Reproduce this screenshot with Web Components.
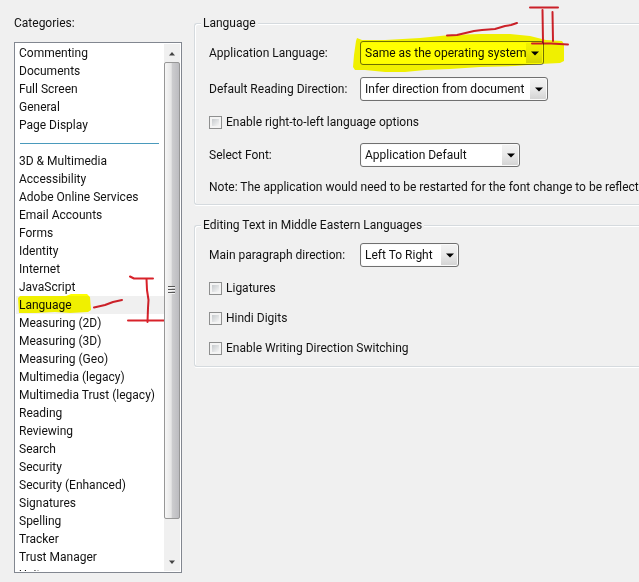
<!DOCTYPE html>
<html lang="en">
<head>
<meta charset="utf-8">
<meta name="viewport" content="width=device-width, initial-scale=1">
<title>Preferences</title>
<style>
  body {
    margin: 0;
    background: #f0f0f0;
    color: #111;
    font: 12px/16px Roboto, "Open Sans", sans-serif;
    overflow: hidden;
  }
</style>
</head>
<body>
<preferences-page>
  <category-list slot="categories" label="Categories:">
    <category-item>Commenting</category-item>
    <category-item>Documents</category-item>
    <category-item>Full Screen</category-item>
    <category-item>General</category-item>
    <category-item>Page Display</category-item>
    <category-divider></category-divider>
    <category-item>3D &amp; Multimedia</category-item>
    <category-item>Accessibility</category-item>
    <category-item>Adobe Online Services</category-item>
    <category-item>Email Accounts</category-item>
    <category-item>Forms</category-item>
    <category-item>Identity</category-item>
    <category-item>Internet</category-item>
    <category-item>JavaScript</category-item>
    <category-item selected>Language<marker-note slot="note" kind="category"></marker-note></category-item>
    <category-item>Measuring (2D)</category-item>
    <category-item>Measuring (3D)</category-item>
    <category-item>Measuring (Geo)</category-item>
    <category-item>Multimedia (legacy)</category-item>
    <category-item>Multimedia Trust (legacy)</category-item>
    <category-item>Reading</category-item>
    <category-item>Reviewing</category-item>
    <category-item>Search</category-item>
    <category-item>Security</category-item>
    <category-item>Security (Enhanced)</category-item>
    <category-item>Signatures</category-item>
    <category-item>Spelling</category-item>
    <category-item>Tracker</category-item>
    <category-item>Trust Manager</category-item>
    <category-item>Units</category-item>
  </category-list>

  <option-group legend="Language">
    <select-field label="Application Language:" value="Same as the operating system" size="184">
      <marker-note slot="note" kind="select"></marker-note>
    </select-field>
    <select-field label="Default Reading Direction:" value="Infer direction from document" size="188"></select-field>
    <check-field label="Enable right-to-left language options"></check-field>
    <select-field label="Select Font:" value="Application Default" size="160"></select-field>
    <hint-text>Note: The application would need to be restarted for the font change to be reflect</hint-text>
  </option-group>

  <option-group legend="Editing Text in Middle Eastern Languages">
    <select-field label="Main paragraph direction:" value="Left To Right" size="99"></select-field>
    <check-field label="Ligatures"></check-field>
    <check-field label="Hindi Digits"></check-field>
    <check-field label="Enable Writing Direction Switching"></check-field>
  </option-group>
</preferences-page>

<script>
class PreferencesPage extends HTMLElement {
  constructor() {
    super();
    this.attachShadow({ mode: 'open' });
    this.shadowRoot.innerHTML = `
      <style>
        :host {
          display: flex;
          gap: 12px;
          box-sizing: border-box;
          height: 100vh;
          padding: 15px 0 9px 14px;
        }

        main {
          flex: 1;
          min-width: 0;
          display: flex;
          flex-direction: column;
          gap: 12px;
        }
      </style>
      <slot name="categories"></slot>
      <main><slot></slot></main>
    `;
  }
}

class CategoryList extends HTMLElement {
  constructor() {
    super();
    this.attachShadow({ mode: 'open' });
  }

  connectedCallback() {
    this.shadowRoot.innerHTML = `
      <style>
        :host {
          display: flex;
          flex-direction: column;
          flex: none;
          gap: 11px;
          width: 168px;
        }

        .frame {
          flex: 1;
          min-height: 0;
          display: flex;
          background: #fff;
          border: 1px solid #828790;
          padding: 1px;
        }

        .items {
          flex: 1;
          min-width: 0;
          overflow: hidden;
        }
      </style>
      <div id="label">${this.getAttribute('label')}</div>
      <div class="frame">
        <div class="items" role="listbox" aria-labelledby="label"><slot></slot></div>
        <scroll-bar></scroll-bar>
      </div>
    `;

    const items = this.shadowRoot.querySelector('.items');
    this.shadowRoot.querySelector('scroll-bar').addEventListener('step', e => {
      items.scrollTop += e.detail * 18;
    });
    this.addEventListener('click', e => {
      const item = e.target.closest('category-item');
      if (!item) return;
      this.querySelectorAll('category-item').forEach(c => c.toggleAttribute('selected', c === item));
    });
  }
}

class CategoryItem extends HTMLElement {
  constructor() {
    super();
    this.attachShadow({ mode: 'open' });
    this.shadowRoot.innerHTML = `
      <style>
        :host {
          display: block;
          position: relative;
          padding: 0 3px;
          line-height: 18px;
          white-space: nowrap;
          cursor: default;
        }

        :host([selected]) {
          background: #f0f0f0;
        }
      </style>
      <slot></slot><slot name="note"></slot>
    `;
  }

  static get observedAttributes() {
    return ['selected'];
  }

  connectedCallback() {
    this.setAttribute('role', 'option');
  }

  attributeChangedCallback() {
    this.setAttribute('aria-selected', this.hasAttribute('selected'));
  }
}

class CategoryDivider extends HTMLElement {
  constructor() {
    super();
    this.attachShadow({ mode: 'open' });
    this.shadowRoot.innerHTML = `
      <style>
        :host {
          display: grid;
          align-items: center;
          height: 18px;
          padding: 0 5px 0 4px;
        }

        hr {
          width: 100%;
          height: 1px;
          margin: 0;
          border: 0;
          background: #4a9abc;
        }
      </style>
      <hr>
    `;
  }
}

class ScrollBar extends HTMLElement {
  constructor() {
    super();
    this.attachShadow({ mode: 'open' });
    this.shadowRoot.innerHTML = `
      <style>
        :host {
          display: flex;
          flex-direction: column;
          flex: none;
          width: 16px;
          background: #f0f0f0;
        }

        button {
          display: grid;
          place-items: center;
          height: 18px;
          padding: 0;
          border: 0;
          background: none;
        }

        .track {
          flex: 1;
          min-height: 0;
        }

        .thumb {
          display: grid;
          place-items: center;
          box-sizing: border-box;
          height: 93%;
          border: 1px solid #979797;
          border-radius: 2px;
          background: linear-gradient(to right, #f6f6f6, #e6e6e6 45%, #cdcdcf 50%, #bcbcc0);
        }

        svg {
          display: block;
        }
      </style>
      <button aria-label="Scroll up" data-step="-1">
        <svg width="8" height="5"><path d="M1 4.5 4 1 7 4.5z" fill="#444"/></svg>
      </button>
      <div class="track">
        <div class="thumb">
          <svg width="8" height="8">
            <path d="M0 .5h7M0 3.5h7M0 6.5h7" stroke="#555"/>
            <path d="M0 1.5h7M0 4.5h7M0 7.5h7" stroke="#f4f4f4"/>
          </svg>
        </div>
      </div>
      <button aria-label="Scroll down" data-step="1">
        <svg width="8" height="5"><path d="M1 .5h6L4 4z" fill="#444"/></svg>
      </button>
    `;
    this.shadowRoot.querySelectorAll('button').forEach(button => {
      button.addEventListener('click', () => {
        this.dispatchEvent(new CustomEvent('step', { detail: Number(button.dataset.step) }));
      });
    });
  }
}

class OptionGroup extends HTMLElement {
  constructor() {
    super();
    this.attachShadow({ mode: 'open' });
  }

  connectedCallback() {
    // The right side runs out of the window, so it has no border
    this.shadowRoot.innerHTML = `
      <style>
        :host {
          display: block;
        }

        fieldset {
          margin: 0;
          min-width: 0;
          padding: 10px 0 9px 6px;
          border: 1px solid #d5dade;
          border-right: 0;
          border-radius: 3px 0 0 3px;
          box-shadow: inset 1px 1px #fff, 0 1px #fff;
        }

        legend {
          padding: 0 2px;
          background: #f0f0f0;
        }

        .rows {
          display: flex;
          flex-direction: column;
          gap: 12px;
          padding-left: 8px;
        }
      </style>
      <fieldset>
        <legend>${this.getAttribute('legend')}</legend>
        <div class="rows"><slot></slot></div>
      </fieldset>
    `;
  }
}

class SelectField extends HTMLElement {
  constructor() {
    super();
    this.attachShadow({ mode: 'open' });
  }

  connectedCallback() {
    this.shadowRoot.innerHTML = `
      <style>
        :host {
          display: grid;
          grid-template-columns: 151px auto;
          justify-content: start;
          align-items: center;
          white-space: nowrap;
        }

        .box {
          display: grid;
          align-items: center;
          position: relative;
          width: ${this.getAttribute('size')}px;
        }

        select, svg {
          grid-area: 1 / 1;
        }

        select {
          appearance: none;
          box-sizing: border-box;
          width: 100%;
          height: 24px;
          margin: 0;
          padding: 0 16px 0 4px;
          border: 1px solid #707070;
          border-radius: 3px;
          background: linear-gradient(#f3f3f3, #e9e9e9 50%, #d2d2d2) right / 17px 100% no-repeat, #fff;
          box-shadow: inset 0 0 0 1px #fafafa;
          color: inherit;
          font: inherit;
        }

        svg {
          justify-self: end;
          margin-right: 5px;
          pointer-events: none;
        }
      </style>
      <label for="field">${this.getAttribute('label')}</label>
      <div class="box">
        <select id="field"><option>${this.getAttribute('value')}</option></select>
        <svg width="8" height="5"><path d="M0 .5h8L4 4.5z" fill="#000"/></svg>
        <slot name="note"></slot>
      </div>
    `;
  }
}

class CheckField extends HTMLElement {
  constructor() {
    super();
    this.attachShadow({ mode: 'open' });
  }

  connectedCallback() {
    this.shadowRoot.innerHTML = `
      <style>
        :host {
          display: flex;
          align-items: center;
          gap: 4px;
          height: 18px;
        }

        input {
          appearance: none;
          box-sizing: border-box;
          width: 13px;
          height: 13px;
          margin: 0;
          border: 1px solid #8e8f8f;
          background: linear-gradient(135deg, #c6cacd, #f6f6f6) content-box, #f4f4f4;
          padding: 2px;
        }

        input:checked {
          background: #3c6f9c content-box;
        }
      </style>
      <input type="checkbox" id="field">
      <label for="field">${this.getAttribute('label')}</label>
    `;
  }
}

class HintText extends HTMLElement {
  constructor() {
    super();
    this.attachShadow({ mode: 'open' });
    this.shadowRoot.innerHTML = `
      <style>
        :host {
          display: block;
          white-space: nowrap;
        }
      </style>
      <slot></slot>
    `;
  }
}

// Highlighter and red pen strokes, laid over the control they belong to
class MarkerNote extends HTMLElement {
  constructor() {
    super();
    this.attachShadow({ mode: 'open' });
  }

  connectedCallback() {
    const drawings = {
      category: `
        <svg width="152" height="52" viewBox="14 274 152 52">
          <path class="ink" d="M18 298 20 296 66 296 71 294 87 294 90 297 91 310 88 312 70 313 55 312 36 313 19 313z"/>
          <path class="pen" d="M94 307.500 105 305 113 302 122 300M130 276.500 134 278.500 153 278.500M146.500 279 147 290 148.500 300 148 308 147.500 322M128 320.500H165"/>
        </svg>`,
      select: `
        <svg width="220" height="76" viewBox="350 0 220 76">
          <path class="ink" d="M356 41 357 38 362 40 385 40 420 38 450 35 480 34 510 34 530 36 546 40 562 41 564 44 564 61 560 63 540 64 515 66 480 67 450 69 425 70 405 72 385 72 365 70 355 70 353 67 354 55z"/>
          <path class="pen" d="M447 35.500 457 35 474 31 482 30 495 29 505 26 511 25 517 23M530 7.500H558M542.500 10 543 42M552.500 12 553 41M532 43.500H551L568 44.500"/>
        </svg>`
    };
    this.shadowRoot.innerHTML = `
      <style>
        :host {
          position: absolute;
          pointer-events: none;
          mix-blend-mode: multiply;
        }

        :host([kind="category"]) {
          left: -2px;
          top: -22px;
        }

        :host([kind="select"]) {
          left: -10px;
          top: -41px;
        }

        svg {
          display: block;
        }

        .ink {
          fill: #ffff00;
        }

        .pen {
          fill: none;
          stroke: #d8222a;
          stroke-width: 2;
          stroke-linecap: round;
          stroke-linejoin: round;
        }
      </style>
      ${drawings[this.getAttribute('kind')]}
    `;
  }
}

customElements.define('preferences-page', PreferencesPage);
customElements.define('category-list', CategoryList);
customElements.define('category-item', CategoryItem);
customElements.define('category-divider', CategoryDivider);
customElements.define('scroll-bar', ScrollBar);
customElements.define('option-group', OptionGroup);
customElements.define('select-field', SelectField);
customElements.define('check-field', CheckField);
customElements.define('hint-text', HintText);
customElements.define('marker-note', MarkerNote);
</script>
</body>
</html>
